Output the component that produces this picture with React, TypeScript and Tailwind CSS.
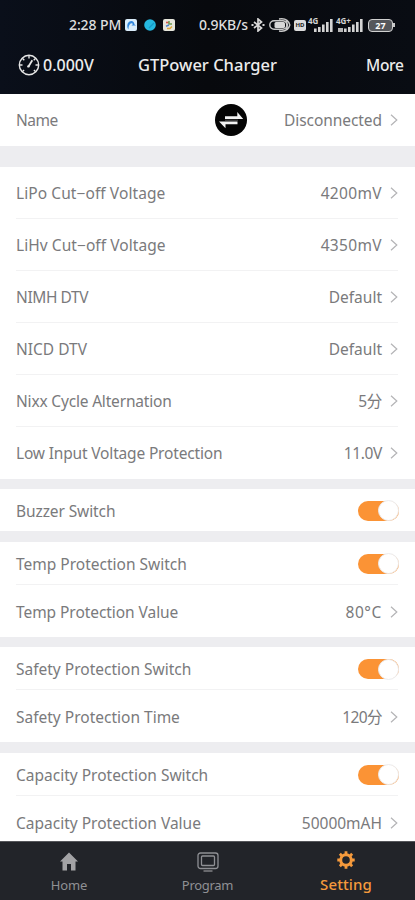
import React, { useState } from 'react';

interface Row {
  label: string;
  labelClass?: string;
  value?: string;
  valueClass?: string;
  kind?: 'toggle' | 'link';
  height: string;
}

interface Section {
  id: string;
  rows: Row[];
}

const sections: Section[] = [
  {
    id: 'voltage',
    rows: [
      { label: 'LiPo Cut−off Voltage', labelClass: 'tracking-[0.08px]', value: '4200mV', valueClass: 'tracking-[0.35px]', height: 'h-[52px] pt-px' },
      { label: 'LiHv Cut−off Voltage', labelClass: 'tracking-[0.06px]', value: '4350mV', valueClass: 'tracking-[0.35px]', height: 'h-[52px] pt-px' },
      { label: 'NIMH DTV', labelClass: 'tracking-[-0.4px]', value: 'Default', height: 'h-[52px] pt-px' },
      { label: 'NICD DTV', value: 'Default', height: 'h-[52px] pt-px' },
      { label: 'Nixx Cycle Alternation', labelClass: 'tracking-[-0.18px]', value: '5分', valueClass: 'tracking-[-0.3px]', height: 'h-[52px] pt-px' },
      { label: 'Low Input Voltage Protection', labelClass: 'tracking-[-0.17px]', value: '11.0V', valueClass: 'tracking-[-0.35px]', height: 'h-[52px] pt-px' },
    ],
  },
  {
    id: 'buzzer',
    rows: [{ label: 'Buzzer Switch', labelClass: 'tracking-[-0.1px]', kind: 'toggle', height: 'h-[42px] pt-[2px]' }],
  },
  {
    id: 'temp',
    rows: [
      { label: 'Temp Protection Switch', kind: 'toggle', height: 'h-[43px] pt-[2px]' },
      { label: 'Temp Protection Value', labelClass: 'tracking-[-0.06px]', value: '80°C', valueClass: 'tracking-[0.6px]', height: 'h-[52px] pt-[3px]' },
    ],
  },
  {
    id: 'safety',
    rows: [
      { label: 'Safety Protection Switch', kind: 'toggle', height: 'h-[43px] pt-[2px]' },
      { label: 'Safety Protection Time', value: '120分', valueClass: 'tracking-[-0.6px]', height: 'h-[52px] pt-[3px]' },
    ],
  },
  {
    id: 'capacity',
    rows: [
      { label: 'Capacity Protection Switch', kind: 'toggle', height: 'h-[43px] pt-[2px]' },
      { label: 'Capacity Protection Value', value: '50000mAH', height: 'h-[52px] pt-[3px]' },
    ],
  },
];

const ChevronIcon = () => (
  <svg className="ml-2 h-3 w-2 shrink-0" viewBox="0 0 8 12" fill="none" stroke="#b4b4b6" strokeWidth="1.2">
    <path d="M1 .8 6.8 6 1 11.2" />
  </svg>
);

const GaugeIcon = () => (
  <svg className="h-[22px] w-[22px]" viewBox="0 0 22 22" fill="none" stroke="#e6e6e6" strokeWidth="1.4">
    <circle cx="11" cy="11" r="9.7" />
    <path d="M11 1.5v3M1.5 11h3M17.5 11h3M4.3 4.3l2 2M17.7 4.3l-2 2M4.3 17.7l1.8-1.8M17.7 17.7l-1.8-1.8" />
    <path d="m10.5 12.5 3.8-6.2" strokeWidth="1.8" />
    <circle cx="10.4" cy="12.4" r="1.2" fill="#e6e6e6" stroke="none" />
  </svg>
);

const SwapIcon = () => (
  <svg className="h-8 w-8" viewBox="0 0 32 32">
    <circle cx="16" cy="16" r="16" fill="#050505" />
    <path d="M10 12.2h12.3V8l5.9 7H10zM22.500 17.500v2.800h-12v4L4 17.500z" fill="#f4f4f4" />
    <path d="M10 16.200h13" stroke="#555" strokeWidth="1" />
  </svg>
);

const BluetoothIcon = () => (
  <svg className="h-[14px] w-[14px]" viewBox="0 0 14 14" fill="none" stroke="#d8d8d8" strokeWidth="1.7">
    <path d="m3 4 7.5 6L7 13V1l3.5 3L3 10" />
    <path d="M.5 7h2M11.5 7h2" strokeWidth="1.8" />
  </svg>
);

const EyeCareIcon = () => (
  <svg className="h-[14px] w-[22px]" viewBox="0 0 22 14" fill="none" stroke="#c9c9c9" strokeWidth="1.4">
    <rect x=".8" y="2.7" width="17" height="8.6" rx="4.3" />
    <rect x="5.5" y="4" width="10.5" height="6" rx="1.5" fill="#d8d8d8" stroke="none" />
    <path d="M10 1c6-1 9.500 1 10.800 6-1.300 5-4.800 7-10.800 6M16.500 2.800c2.600 2 2.600 6.400 0 8.400" />
  </svg>
);

const SignalBars = ({ label, sub }: { label: string; sub?: boolean }) => (
  <span className="relative mb-[2px] block h-[15px] w-full">
    <svg className="absolute right-0 bottom-0 h-[13px] w-5" viewBox="0 0 20 13" fill="#d4d4d4">
      <rect x="1" y="9.500" width="2.600" height="3.500" />
      <rect x="5" y="8" width="2.600" height="5" />
      <rect x="9" y="5.500" width="2.600" height="7.500" />
      <rect x="13" y="3" width="2.600" height="10" />
      <rect x="17" y="0" width="2.600" height="13" />
    </svg>
    {sub && <span className="absolute bottom-0 left-[2px] h-[4px] w-[5px] bg-[#b5b5b5]" />}
    <span className="absolute top-0 left-0 text-[8px] leading-[8px] font-bold text-[#d4d4d4]">{label}</span>
  </span>
);

const StatusBar = () => (
  <div className="flex h-[50px] w-full items-center pl-[69px] text-[14px] font-medium whitespace-nowrap text-[#dedede]">
    <span className="w-[56px] tracking-[-0.1px]">2:28 PM</span>
    <svg className="h-3 w-3" viewBox="0 0 12 12">
      <rect width="12" height="12" rx="2" fill="#d9ecfa" />
      <path d="M3.500 10.500C1.500 8 2 4 4.500 2.500 7 1 9.500 3 9.500 5.500l1.500 1H6.500L8 5C6 3 3.500 5.500 3.500 10.500z" fill="#3186dc" />
    </svg>
    <svg className="ml-[7px] h-3 w-3" viewBox="0 0 12 12">
      <circle cx="6" cy="6" r="5.800" fill="#25b8df" />
      <path d="m5 9 5-5" stroke="#1599c8" strokeWidth="1.200" />
    </svg>
    <svg className="ml-[7px] h-3 w-3" viewBox="0 0 12 12">
      <rect width="12" height="12" rx="2" fill="#e6e6dc" />
      <path d="M3 3.500h3" stroke="#d8564c" strokeWidth="1.600" />
      <path d="M6 2v3h3" stroke="#6f9c52" strokeWidth="1.500" fill="none" />
      <path d="M3 7.200 6 6" stroke="#4b83cf" strokeWidth="1.500" />
      <path d="M4 9.500h3l2-2" stroke="#e0a93c" strokeWidth="1.500" fill="none" />
    </svg>
    <span className="ml-[24px] w-[52px] tracking-[-0.15px]">0.9KB/s</span>
    <BluetoothIcon />
    <span className="ml-1">
      <EyeCareIcon />
    </span>
    <span className="ml-[3px] flex h-[11px] w-3 items-center justify-center rounded-[2px] bg-[#dcdcdc] text-[6px] font-bold text-[#222]">
      HD
    </span>
    <span className="ml-[2px] w-[25px]">
      <SignalBars label="4G" />
    </span>
    <span className="ml-[3px] w-[27px]">
      <SignalBars label="4G+" sub />
    </span>
    <span className="ml-[5px] flex items-center">
      <span className="flex h-[13px] w-[25px] items-center justify-center rounded-[4px] border-[1.5px] border-[#d0d0d0] bg-[#55575b] text-[9px] leading-none font-bold text-white">
        27
      </span>
      <span className="h-1 w-[2px] bg-[#c8c8c8]" />
    </span>
  </div>
);

const Toggle = () => {
  const [on, setOn] = useState(true);
  return (
    <button
      role="switch"
      aria-checked={on}
      onClick={() => setOn(!on)}
      className={`mr-[-1px] flex h-[20px] w-[41px] items-center rounded-full ${on ? 'justify-end bg-[#fb9335]' : 'bg-gray-200'}`}
    >
      <span className="h-[21px] w-[21px] shrink-0 rounded-full border border-[#ececee] bg-white" />
    </button>
  );
};

const SettingRow = ({ row, last }: { row: Row; last: boolean }) => (
  <div className={`mr-[17px] ml-4 flex items-center justify-between border-b ${last ? 'border-transparent' : 'border-[#f2f2f3]'} ${row.height}`}>
    <span className={`whitespace-nowrap ${row.labelClass ?? ''}`}>{row.label}</span>
    {row.kind === 'toggle' ? (
      <Toggle />
    ) : (
      <span className="flex items-center">
        <span className={row.valueClass}>{row.value}</span>
        <ChevronIcon />
      </span>
    )}
  </div>
);

const TabBar = () => (
  <nav className="flex h-[59px] shrink-0 border-t border-[#55565a] bg-[#222429] text-[13px] leading-4 text-[#8f9094]">
    <div className="flex w-[138px] flex-col items-center pt-[10px]">
      <svg className="h-[19px] w-5" viewBox="0 0 20 19" fill="#a3a3a5">
        <path d="M10 .500 19 9.500h-2.500V18.500H12V12H8v6.500H3.500V9.500H1z" />
      </svg>
      <span className="mt-[6px] tracking-[-0.1px]">Home</span>
    </div>
    <div className="flex w-[139px] flex-col items-center pt-[10px]">
      <svg className="h-[20px] w-[22px]" viewBox="0 0 22 20" fill="none" stroke="#8f9094" strokeWidth="1.300">
        <rect x="1" y="1" width="20" height="15.500" rx="2.500" />
        <rect x="4.500" y="4" width="13" height="9.500" rx="1" />
        <path d="M6.500 19h9" />
      </svg>
      <span className="mt-[5px] tracking-[-0.3px]">Program</span>
    </div>
    <div className="flex w-[138px] flex-col items-center pt-[9px] text-[15px] text-[#f59a3c]">
      <svg className="h-[18px] w-[18px]" viewBox="0 0 18 18" fill="none" stroke="#f59a3c">
        <circle cx="9" cy="9" r="5.300" strokeWidth="3" />
        <path d="M9 .300v4M9 13.700v4M.300 9h4M13.700 9h4M2.850 2.850l2.800 2.800M12.350 12.350l2.800 2.800M2.850 15.150l2.800-2.800M12.350 5.650l2.800-2.800" strokeWidth="2.800" />
      </svg>
      <span className="mt-[7px] font-medium tracking-[0.1px]">Setting</span>
    </div>
  </nav>
);

export default function App() {
  return (
    <div className="flex h-[900px] w-[415px] flex-col overflow-hidden bg-[#ededf0] font-['Noto_Sans','Noto_Sans_CJK_SC',sans-serif] text-[15.5px] leading-5 text-[#7a7a7c]">
      <header className="h-[94px] shrink-0 bg-linear-to-r from-[#0a0f1a] via-[#07090d] to-[#090c13] text-[#ececec]">
        <StatusBar />
        <div className="flex h-[30px] items-center pl-[18px] font-medium whitespace-nowrap">
          <GaugeIcon />
          <span className="ml-[3px] w-[95px] text-[16px]">0.000V</span>
          <h1 className="w-[228px] text-[16.5px]">GTPower Charger</h1>
          <span className="text-[15.5px] tracking-[-0.3px]">More</span>
        </div>
      </header>

      <main className="min-h-0 flex-1 overflow-hidden">
        <div className="mb-[21px] flex h-[52px] items-center bg-white pr-[17px] pl-4">
          <span className="w-[199px] tracking-[-0.5px]">Name</span>
          <SwapIcon />
          <span className="ml-auto flex items-center">
            <span className="tracking-[-0.07px]">Disconnected</span>
            <ChevronIcon />
          </span>
        </div>
        {sections.map((section) => (
          <section key={section.id} className="mb-[10.4px] bg-white">
            {section.rows.map((row, i) => (
              <SettingRow key={row.label} row={row} last={i === section.rows.length - 1} />
            ))}
          </section>
        ))}
      </main>

      <TabBar />
    </div>
  );
}
